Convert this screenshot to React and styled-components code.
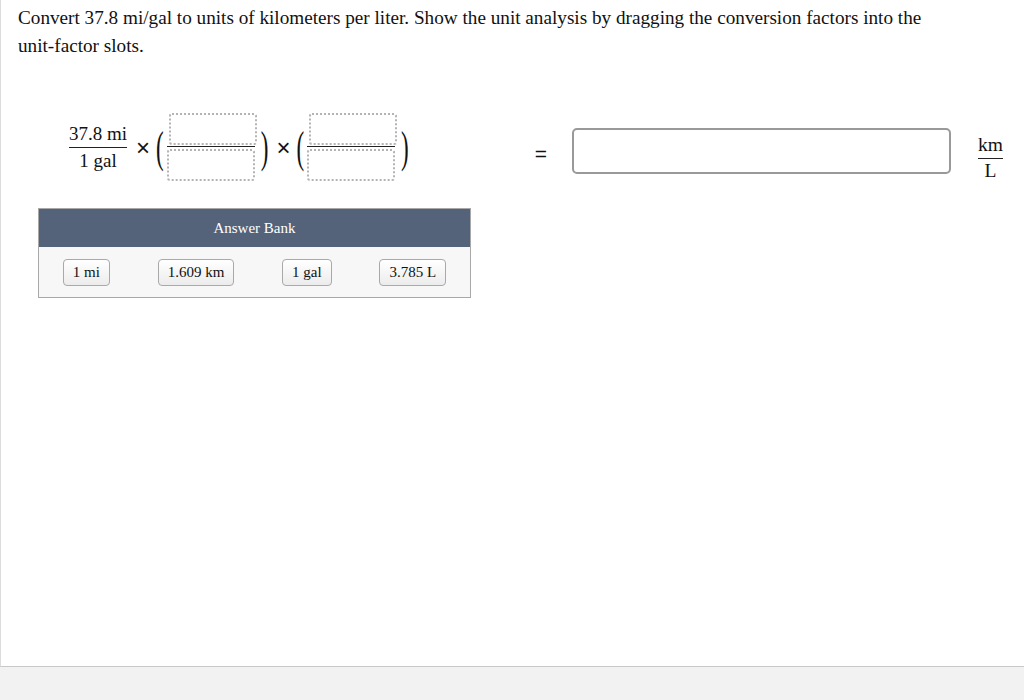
import React from "react";
import styled, { createGlobalStyle } from "styled-components";

const GlobalStyle = createGlobalStyle`
  html, body {
    margin: 0;
    padding: 0;
    background: #f2f2f2;
  }
`;

const Panel = styled.div`
  box-sizing: border-box;
  height: 667px;
  background: #fff;
  border-left: 1px solid #dcdcdc;
  border-bottom: 1px solid #c8c8c8;
  box-shadow: 0 2px 3px rgba(0, 0, 0, 0.12);
  padding: 4px 18px 0 17px;
  font-family: "Liberation Serif", "Times New Roman", serif;
  color: #111;
`;

const Prompt = styled.p`
  margin: 0;
  font-size: 19.2px;
  line-height: 28px;
  max-width: 925px;
`;

const EquationRow = styled.div`
  display: flex;
  align-items: center;
  margin-top: 53px;
  padding-left: 51px;
  height: 68px;
`;

const Fraction = styled.div`
  display: inline-flex;
  flex-direction: column;
  align-items: center;
  font-size: ${(p) => p.size || 19}px;
  line-height: 1.15;
`;

const Bar = styled.div`
  align-self: stretch;
  height: 1px;
  background: #222;
  margin: ${(p) => p.gap || 2}px 0;
`;

const Times = styled.span`
  font-family: "Liberation Sans", Arial, sans-serif;
  font-size: 24px;
  line-height: 24px;
  margin: 2px 6px 0 ${(p) => p.lead || 8}px;
`;

const Paren = styled.span`
  display: inline-block;
  font-size: 23px;
  line-height: 23px;
  transform: scale(1, 1.9);
  margin: 0 ${(p) => (p.close ? 0 : 3)}px 0 ${(p) => (p.close ? 4 : 0)}px;
`;

const SlotFraction = styled.div`
  display: flex;
  flex-direction: column;
  width: 90px;
`;

const Slot = styled.div`
  box-sizing: border-box;
  width: 88px;
  height: 32px;
  border: 2px dotted #b4b4b4;
  border-radius: 3px;
  margin-left: ${(p) => (p.top ? 2 : 0)}px;
`;

const SlotBar = styled.div`
  height: 1px;
  width: 88px;
  background: #222;
  margin: 1px 0 2px;
`;

const Equals = styled.span`
  font-family: "Liberation Sans", Arial, sans-serif;
  font-size: 21px;
  margin: 13px 25px 0 ${(p) => p.lead}px;
`;

const AnswerBox = styled.div`
  box-sizing: border-box;
  width: 379px;
  height: 46px;
  border: 2px solid #999;
  border-radius: 5px;
  margin-top: 8px;
`;

const UnitsWrap = styled.div`
  margin-left: 27px;
  margin-top: 22px;
`;

const Bank = styled.div`
  width: 431px;
  margin: 27px 0 0 20px;
  border: 1px solid #a8a8a8;
  background: #f7f7f7;
`;

const BankHeader = styled.div`
  height: 38px;
  background: #54627a;
  color: #fff;
  font-size: 15px;
  display: flex;
  align-items: center;
  justify-content: center;
`;

const BankItems = styled.div`
  display: flex;
  justify-content: space-around;
  align-items: center;
  height: 50px;
`;

const Chip = styled.div`
  box-sizing: border-box;
  height: 27px;
  padding: 0 9px;
  display: flex;
  align-items: center;
  font-size: 15px;
  border: 1px solid #a9a9a9;
  border-radius: 4px;
  background: linear-gradient(#ffffff, #ececec);
`;

const chips = ["1 mi", "1.609 km", "1 gal", "3.785 L"];

const UnitSlot = () => (
  <SlotFraction>
    <Slot top />
    <SlotBar />
    <Slot />
  </SlotFraction>
);

export default function App() {
  return (
    <>
      <GlobalStyle />
      <Panel>
        <Prompt>
          Convert 37.8 mi/gal to units of kilometers per liter. Show the unit
          analysis by dragging the conversion factors into the unit-factor
          slots.
        </Prompt>

        <EquationRow>
          <Fraction>
            <span>37.8 mi</span>
            <Bar />
            <span>1 gal</span>
          </Fraction>
          <Times lead={9}>×</Times>
          <Paren>(</Paren>
          <UnitSlot />
          <Paren close>)</Paren>
          <Times>×</Times>
          <Paren>(</Paren>
          <UnitSlot />
          <Paren close>)</Paren>
          <Equals lead={126}>=</Equals>
          <AnswerBox />
          <UnitsWrap>
            <Fraction size={19.5}>
              <span>km</span>
              <Bar gap={1} />
              <span>L</span>
            </Fraction>
          </UnitsWrap>
        </EquationRow>

        <Bank>
          <BankHeader>Answer Bank</BankHeader>
          <BankItems>
            {chips.map((c) => (
              <Chip key={c}>{c}</Chip>
            ))}
          </BankItems>
        </Bank>
      </Panel>
    </>
  );
}
